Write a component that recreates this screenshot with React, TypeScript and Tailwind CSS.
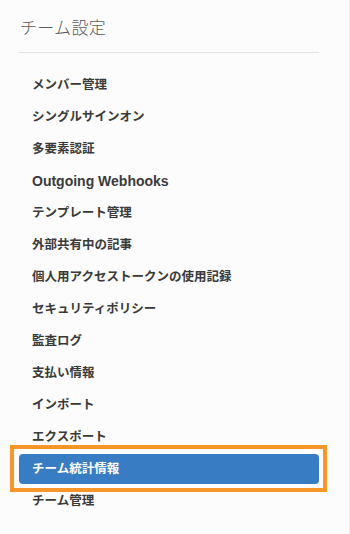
import React from "react";

const items: { label: string; latin?: boolean }[] = [
  { label: "メンバー管理" },
  { label: "シングルサインオン" },
  { label: "多要素認証" },
  { label: "Outgoing Webhooks", latin: true },
  { label: "テンプレート管理" },
  { label: "外部共有中の記事" },
  { label: "個人用アクセストークンの使用記録" },
  { label: "セキュリティポリシー" },
  { label: "監査ログ" },
  { label: "支払い情報" },
  { label: "インポート" },
  { label: "エクスポート" },
  { label: "チーム統計情報" },
  { label: "チーム管理" },
];

export default function App() {
  return (
    <div
      className="w-[350px] h-[534px] bg-[#fcfcfc] border-r border-[#e8e8e8] overflow-hidden"
      style={{ fontFamily: '"Liberation Sans", "Noto Sans CJK JP", sans-serif' }}
    >
      <div className="w-[300px] ml-[19px]">
        <h1 className="pt-[17px] leading-[24px] text-[17px] font-light tracking-[0.3px] text-[#5a5a5a] pl-[1px]">
          チーム設定
        </h1>
        <div className="mt-[11px] h-px bg-[#e3e3e3]" />
        <ul className="mt-[17px] flex flex-col gap-[2px]">
          {items.map((it) => {
            const active = it.label === "チーム統計情報";
            return (
              <li
                key={it.label}
                className={
                  "relative h-[30px] flex items-center pl-[13px] rounded-[4px] font-bold " +
                  (it.latin ? "text-[14px] " : "text-[12.5px] ") +
                  (active ? "bg-[#387cc3] text-white" : "text-[#3a3a3a]")
                }
              >
                {it.label}
                {active && (
                  <div className="absolute -left-[9px] -top-[9px] -right-[8px] -bottom-[8px] border-[4px] border-[#f8962a] pointer-events-none" />
                )}
              </li>
            );
          })}
        </ul>
      </div>
    </div>
  );
}
